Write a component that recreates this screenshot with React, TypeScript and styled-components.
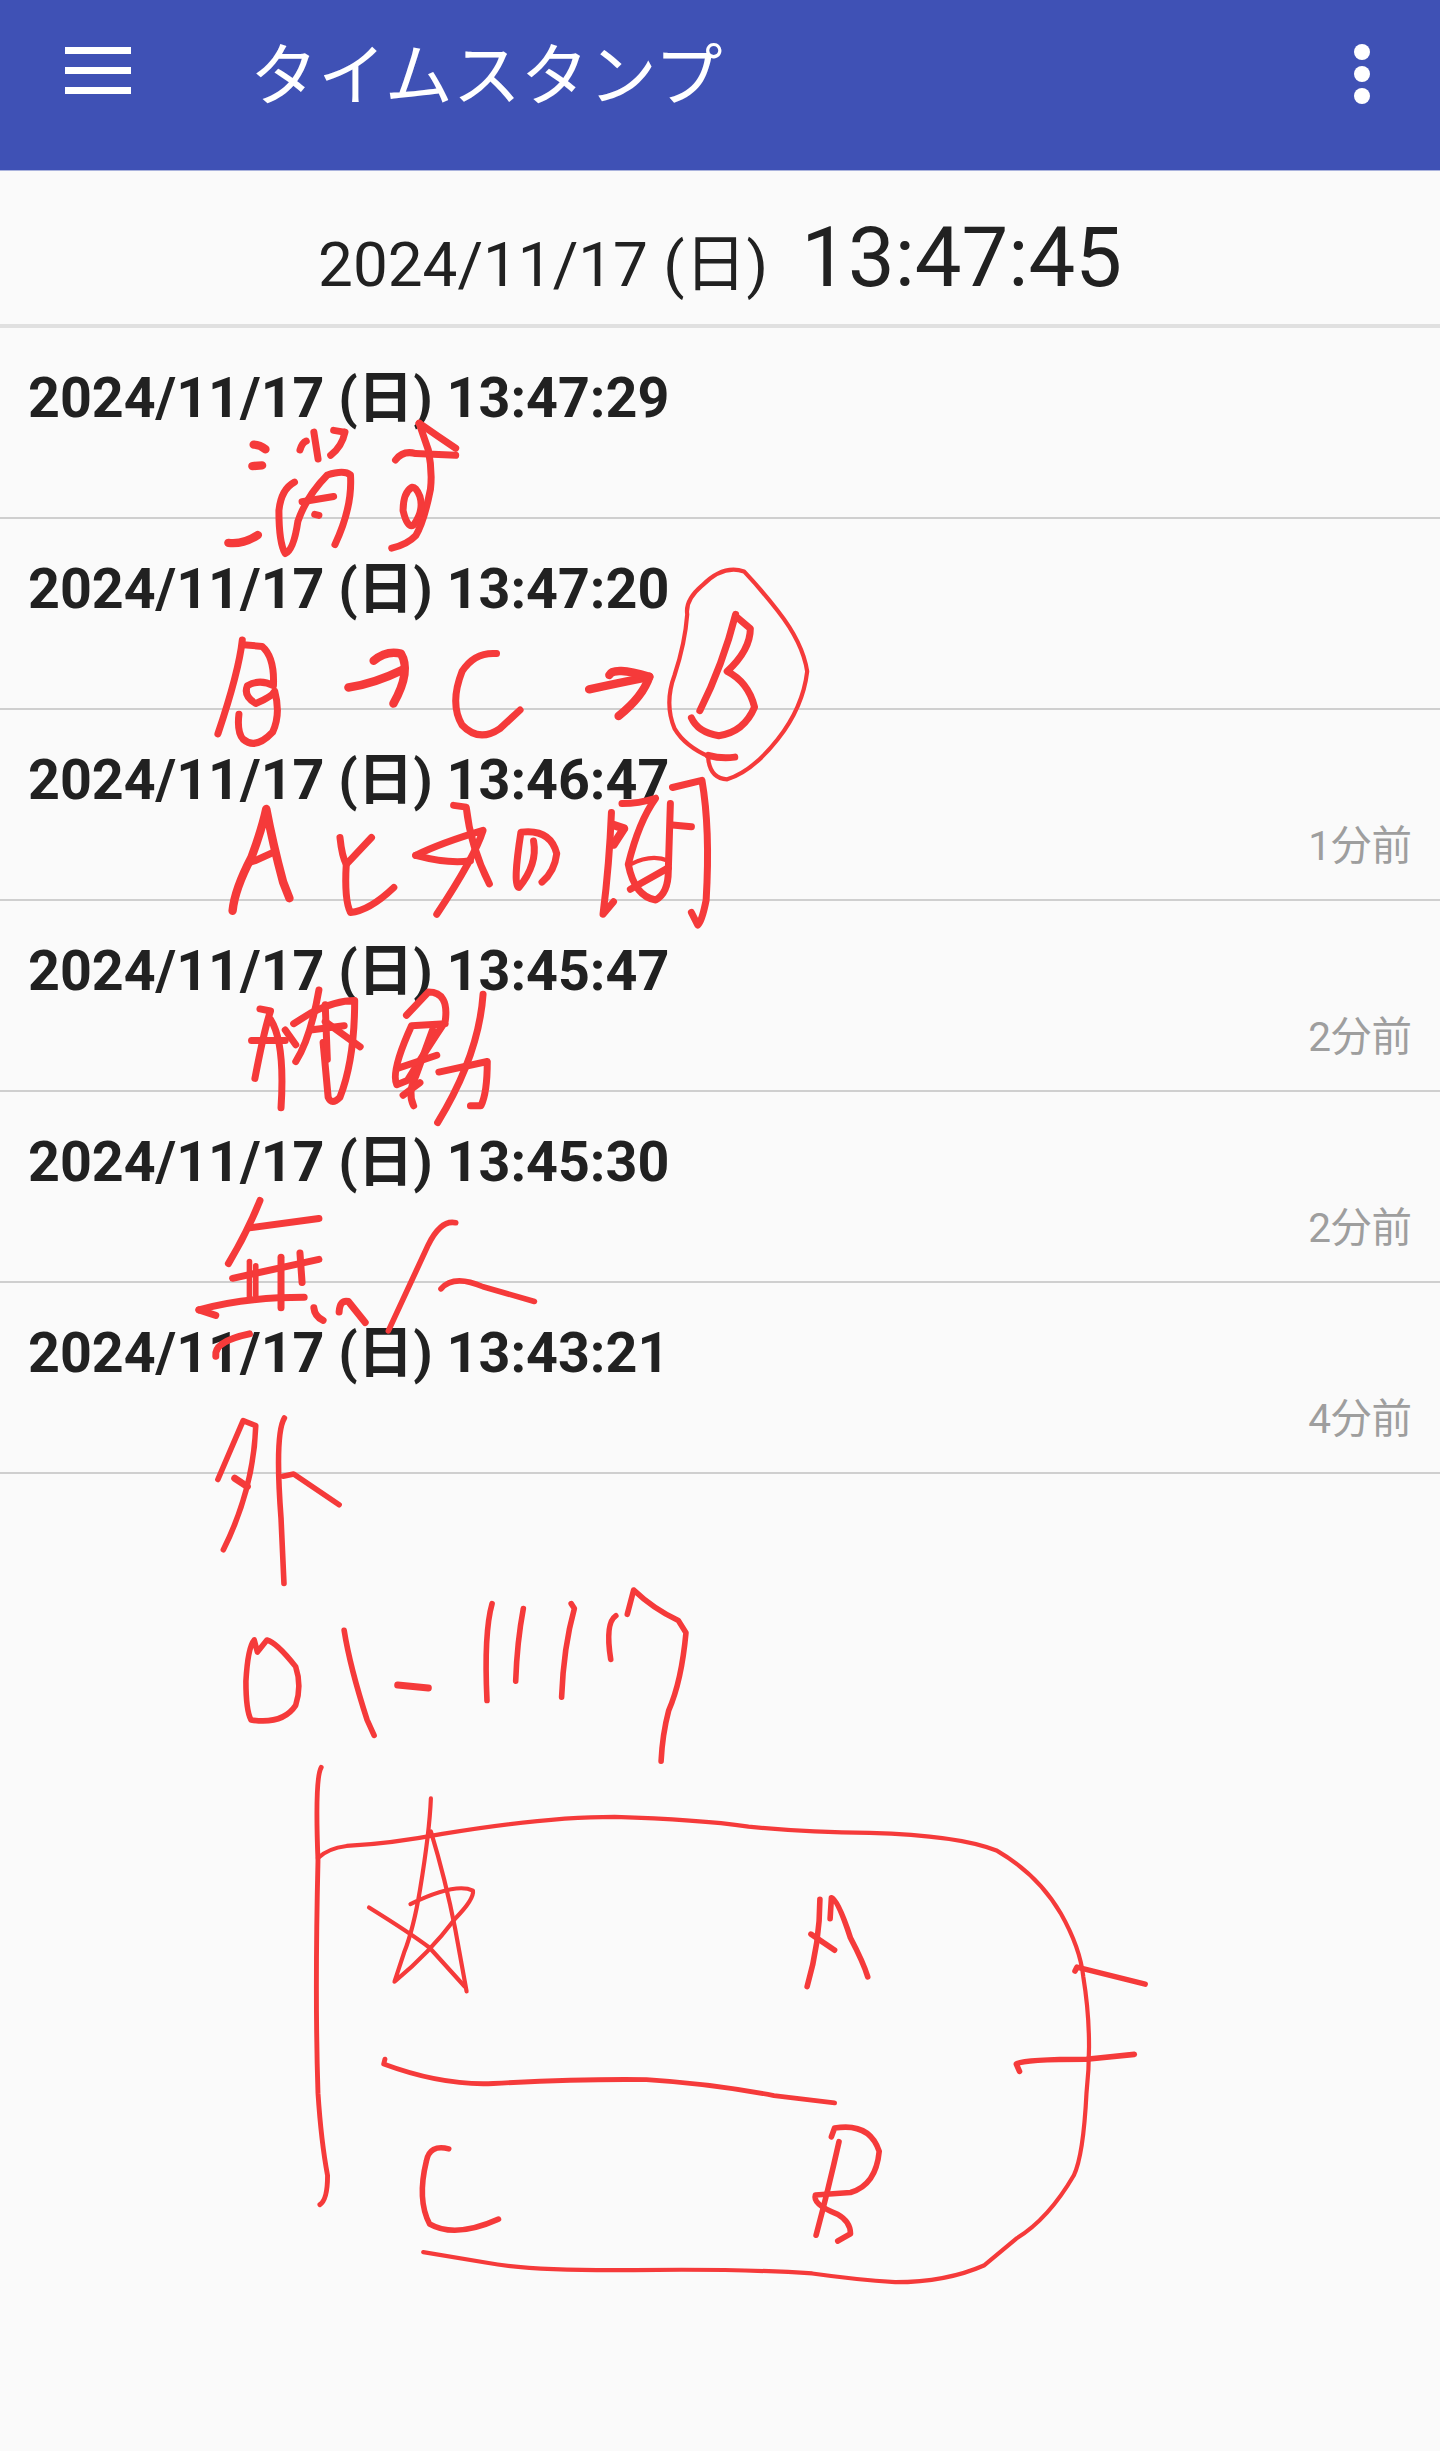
import React from "react";
import styled, { createGlobalStyle } from "styled-components";

const Global = createGlobalStyle`
  html, body { margin: 0; padding: 0; background: #fafafa; }
`;
const FONT = `Roboto, "Noto Sans CJK JP", sans-serif`;

const Page = styled.div`
  position: relative;
  width: 1440px;
  height: 2451px;
  overflow: hidden;
  background: #fafafa;
  font-family: ${FONT};
  color: #212121;
`;
const AppBar = styled.header`
  height: 171px;
  background: #3f51b5;
  display: flex;
  align-items: flex-start;
  padding: 0 0 0 65px;
  box-sizing: border-box;
  color: #fff;
  border-bottom: 1px solid #aab3dd;
`;
const MenuButton = styled.div`
  width: 66px;
  margin-top: 47px;
  display: flex;
  flex-direction: column;
  gap: 13px;
`;
const MenuBar = styled.span`
  display: block;
  height: 7px;
  background: #fff;
`;
const Title = styled.h1`
  margin: 37px 0 0 119px;
  font-size: 68px;
  line-height: 80px;
  font-weight: 400;
  flex: 1;
`;
const More = styled.div`
  width: 16px;
  margin: 44px 70px 0 0;
  display: flex;
  flex-direction: column;
  gap: 6px;
`;
const Dot = styled.span`
  width: 16px;
  height: 16px;
  border-radius: 50%;
  background: #fff;
`;
const Clock = styled.div`
  height: 157px;
  display: flex;
  justify-content: center;
  align-items: baseline;
  gap: 33px;
  box-sizing: border-box;
  line-height: 174px;
  border-bottom: 4px solid #e0e0e0;
`;
const ClockDate = styled.span`
  font-size: 62px;
`;
const ClockTime = styled.span`
  font-size: 83.2px;
`;
const Row = styled.div`
  height: 191px;
  box-sizing: border-box;
  border-bottom: 2px solid #cfcfcf;
  padding: 37px 28px 0 28px;
  display: flex;
  flex-direction: column;
`;
const Stamp = styled.div`
  font-size: 55.6px;
  font-weight: 700;
  line-height: 66px;
`;
const Ago = styled.div`
  margin-top: 10px;
  align-self: flex-end;
  font-size: 40.5px;
  line-height: 46px;
  color: #9e9e9e;
`;
const Ink = styled.svg`
  position: absolute;
  left: 0;
  top: 0;
  width: 1440px;
  height: 2451px;
  pointer-events: none;
`;
const Stroke = styled.path<{ $w?: number }>`
  fill: none;
  stroke: #f53a3a;
  stroke-width: ${(p) => (p.$w ?? 5) * 1.4}px;
  stroke-linecap: round;
  stroke-linejoin: round;
  vector-effect: non-scaling-stroke;
`;

const rows = [
  { t: "2024/11/17 (日) 13:47:29" },
  { t: "2024/11/17 (日) 13:47:20" },
  { t: "2024/11/17 (日) 13:46:47", a: "1分前" },
  { t: "2024/11/17 (日) 13:45:47", a: "2分前" },
  { t: "2024/11/17 (日) 13:45:30", a: "2分前" },
  { t: "2024/11/17 (日) 13:43:21", a: "4分前" },
];

const inkTop: [string, number?][] = [
  ["M175 125 Q190 125 203 138", 6], ["M172 185 L195 183", 6], ["M285 140 Q290 120 300 115"], ["M318 90 L328 165"],
  ["M392 90 Q385 130 358 155"], ["M365 85 L390 90"],
  ["M272 230 Q240 250 235 310 Q235 400 250 430 Q270 420 280 340 Q300 270 350 210 Q390 195 405 210 Q410 300 368 405"],
  ["M290 285 L365 270"], ["M320 320 L330 323"], ["M115 400 Q150 405 185 378", 6],
  ["M512 168 Q530 140 560 150 L655 155"], ["M568 65 L590 140 Q600 200 595 250 Q580 340 560 380 Q540 405 503 415"],
  ["M550 245 Q530 260 530 310 Q540 360 555 350 Q580 310 570 270 Q560 240 550 245"], ["M568 65 Q610 100 655 135"],
  ["M148 672 Q140 760 90 935"],
  ["M150 685 L195 690 Q225 720 222 800 Q190 780 160 800 Q150 830 180 850 Q220 830 225 815 Q240 880 220 930 Q180 980 150 950 Q135 930 140 880"],
  ["M400 805 Q460 795 530 755", 6], ["M460 730 Q490 700 525 710 Q550 760 507 850", 6],
  ["M752 710 Q700 705 670 760 Q640 850 670 910 Q710 960 760 920 L808 868"],
  ["M972 810 Q1050 790 1115 775", 6], ["M1020 770 Q1030 745 1115 775 Q1100 830 1042 885", 6],
  ["M1320 600 Q1290 740 1235 870"],
  ["M1320 605 L1355 640 Q1355 700 1300 760 Q1350 790 1365 860 Q1340 930 1280 940 Q1230 930 1215 890"],
  ["M1260 1000 Q1200 970 1175 920 Q1150 850 1175 770 Q1200 680 1205 600 Q1200 560 1240 520 Q1290 460 1340 480 Q1380 530 1420 590 Q1480 680 1490 760 Q1480 860 1420 950 Q1360 1040 1300 1062 Q1260 1060 1255 1005", 3],
  ["M1255 995 Q1285 1005 1318 1000"],
  ["M125 1430 Q130 1370 170 1280 Q195 1200 205 1145 Q220 1240 245 1350 L260 1395", 6], ["M165 1295 L178 1290 L225 1265", 5],
  ["M380 1225 Q385 1280 395 1300 L455 1225"], ["M395 1300 Q390 1400 405 1435 Q450 1430 508 1365"],
  ["M650 1135 L680 1140 Q690 1250 735 1355"], ["M560 1275 Q620 1240 720 1205 Q700 1280 610 1440"], ["M560 1275 Q640 1300 690 1290"],
  ["M840 1235 Q850 1300 805 1365 Q790 1360 810 1210 Q880 1200 895 1270 Q890 1320 860 1350"],
  ["M1025 1155 Q1020 1300 1005 1440 L1030 1405"], ["M1030 1190 L1055 1200 L1030 1245", 6],
  ["M1050 1130 Q1090 1130 1130 1115 Q1090 1180 1065 1300 Q1080 1390 1130 1400 Q1160 1380 1160 1320 L1165 1130"],
  ["M1070 1300 Q1120 1270 1160 1290", 3], ["M1070 1370 L1160 1310"],
  ["M1170 1085 L1240 1065 Q1260 1200 1250 1400 Q1240 1460 1230 1470 L1215 1435"], ["M1170 1190 L1215 1195"],
];

const inkMid: [string, number?][] = [
  ["M190 140 L215 145 Q200 190 178 305"], ["M170 215 L250 215"], ["M215 165 Q250 220 240 375"], ["M250 190 L275 225"],
  ["M275 265 Q310 210 330 95"], ["M270 175 L310 150 Q370 120 415 120 Q415 260 380 350 Q360 370 352 350 L340 220"],
  ["M345 170 L428 230"], ["M310 190 L390 180"], ["M345 130 L350 260"],
  ["M538 155 L590 100 Q640 100 630 170 Q590 230 540 310 L515 320 Q500 290 550 180 L630 175"],
  ["M600 190 L560 300 Q540 340 555 370"], ["M530 345 L570 315"], ["M520 280 L610 250"], ["M720 105 Q710 250 612 410"],
  ["M615 290 L730 265 Q730 340 715 370 L690 370"],
  ["M190 595 Q160 670 115 745"], ["M165 660 L330 638"], ["M125 780 L330 735"], ["M165 740 L165 825", 4], ["M180 750 V820", 4],
  ["M285 720 L290 790"], ["M240 730 L240 850"], ["M45 855 Q150 825 295 825"], ["M45 855 L85 868"],
  ["M318 850 Q320 870 340 880"], ["M378 860 Q380 830 400 835 L440 885"], ["M85 965 Q80 930 165 912"],
  ["M655 648 Q620 640 590 700 L495 905", 4], ["M620 805 Q650 770 720 800 L842 835", 4],
  ["M90 1258 L150 1118 L180 1130 Q175 1280 103 1425", 4], ["M130 1255 L160 1275"],
  ["M248 1112 Q225 1150 240 1350 L247 1505", 4], ["M245 1250 L270 1245 L378 1318", 4],
];

const inkLow: [string, number?][] = [
  ["M90 190 L85 165 Q75 180 72 250 Q72 310 80 330 Q130 340 150 300 Q160 260 150 220 Q120 170 105 165 Z", 4],
  ["M226 145 Q235 220 262 330 L273 362", 4], ["M310 258 L358 264", 5],
  ["M458 90 Q445 150 450 290", 4], ["M507 100 Q497 170 495 250", 4], ["M582 90 L587 100 Q570 180 567 283", 4],
  ["M652 115 Q635 130 644 205", 4],
  ["M670 112 L680 62 Q710 100 750 125 L762 150 Q755 250 735 310 Q725 360 723 415", 4],
  ["M190 428 Q180 450 185 620 Q180 900 185 1100 Q190 1200 200 1270 Q200 1320 188 1330", 3.5],
  ["M185 615 Q200 595 230 590 Q300 585 380 565 Q540 530 650 530 Q780 535 860 550 Q950 562 1050 563 Q1190 568 1250 600 Q1315 650 1350 730 Q1380 800 1385 860 Q1400 980 1390 1100 Q1385 1230 1370 1270 Q1330 1360 1280 1400 L1230 1455 Q1170 1490 1090 1490 Q1030 1485 960 1472 Q850 1462 680 1465 Q520 1467 450 1450 L350 1428", 3],
  ["M362 492 Q360 560 345 680 Q335 760 320 810 L305 870 Q360 810 400 740 Q430 700 428 682 Q400 665 330 710", 3],
  ["M362 560 Q385 660 400 760 L418 890", 3], ["M265 717 Q330 770 360 800 L415 880", 3],
  ["M972 700 Q972 790 952 880", 4], ["M988 740 L990 697 Q1000 700 1020 780 Q1040 830 1047 860", 4], ["M958 772 L995 805", 4],
  ["M290 1030 L288 1040 Q380 1085 460 1080 Q600 1070 700 1072 Q800 1080 900 1105 L995 1120", 3.5],
  ["M390 1215 Q360 1205 355 1240 Q340 1320 360 1370 Q400 1400 468 1360", 4],
  ["M1002 1200 Q985 1300 966 1393", 4],
  ["M990 1190 L995 1172 Q1050 1160 1065 1220 Q1060 1290 1020 1305 L965 1310 Q960 1330 1000 1350 Q1020 1365 1020 1390 L1000 1405", 4],
  ["M1372 848 L1375 840 L1482 875", 4], ["M1285 1055 L1280 1040 Q1290 1030 1390 1030 L1465 1020", 4],
];

const Strokes = ({ list }: { list: [string, number?][] }) => (
  <>
    {list.map(([d, w], i) => (
      <Stroke key={i} d={d} $w={w} />
    ))}
  </>
);

export default function App() {
  return (
    <Page>
      <Global />
      <AppBar>
        <MenuButton>
          <MenuBar />
          <MenuBar />
          <MenuBar />
        </MenuButton>
        <Title>タイムスタンプ</Title>
        <More>
          <Dot />
          <Dot />
          <Dot />
        </More>
      </AppBar>
      <Clock>
        <ClockDate>2024/11/17 (日)</ClockDate>
        <ClockTime>13:47:45</ClockTime>
      </Clock>
      {rows.map((r) => (
        <Row key={r.t}>
          <Stamp>{r.t}</Stamp>
          {r.a && <Ago>{r.a}</Ago>}
        </Row>
      ))}
      <Ink viewBox="0 0 1440 2451">
        <g transform="translate(180 400) scale(0.42092 0.35714)">
          <Strokes list={inkTop} />
        </g>
        <g transform="translate(180 950) scale(0.42092 0.42092)">
          <Strokes list={inkMid} />
        </g>
        <g transform="translate(200 1560) scale(0.63776 0.48469)">
          <Strokes list={inkLow} />
        </g>
      </Ink>
    </Page>
  );
}
